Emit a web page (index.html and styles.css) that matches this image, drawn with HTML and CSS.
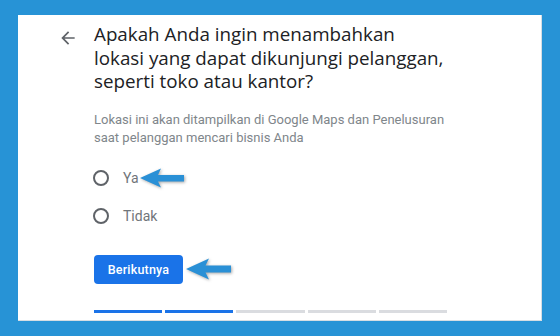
FILE: index.html
```html
<!DOCTYPE html>
<html lang="id">
<head>
<meta charset="utf-8">
<link rel="stylesheet" href="styles.css">
</head>
<body>
<div class="frame">
  <div class="card">
    <div class="back">
      <svg width="20" height="20" viewBox="0 0 24 24"><path d="M20 11H7.83l5.59-5.59L12 4l-8 8 8 8 1.41-1.41L7.83 13H20v-2z" fill="#5f6368"/></svg>
    </div>
    <div class="main">
      <h1 class="title">Apakah Anda ingin menambahkan<br>lokasi yang dapat dikunjungi pelanggan,<br>seperti toko atau kantor?</h1>
      <p class="desc">Lokasi ini akan ditampilkan di Google Maps dan Penelusuran saat pelanggan mencari bisnis Anda</p>
      <div class="options">
        <div class="option">
          <span class="radio"></span>
          <span class="label">Ya</span>
          <svg class="pointer p1" width="46" height="22" viewBox="0 0 46 22"><path d="M1 11 L22 1.5 L19 8 L45 8 L45 14.5 L19 14.5 L22 20.5 Z" fill="#2a90d6"/></svg>
        </div>
        <div class="option">
          <span class="radio"></span>
          <span class="label">Tidak</span>
        </div>
      </div>
      <div class="actions">
        <button class="next">Berikutnya</button>
        <svg class="pointer p2" width="47" height="24" viewBox="0 0 47 24"><path d="M1 12 L24 1.5 L20.5 8.5 L46 8.5 L46 15.5 L20.5 15.5 L24 22.5 Z" fill="#2a90d6"/></svg>
      </div>
      <div class="progress">
        <span class="seg on"></span>
        <span class="seg on"></span>
        <span class="seg"></span>
        <span class="seg"></span>
        <span class="seg"></span>
      </div>
    </div>
  </div>
</div>
</body>
</html>
```

FILE: styles.css
```css
html, body {
  margin: 0;
  padding: 0;
}
body {
  background: #2793d6;
  width: 560px;
  height: 336px;
  overflow: hidden;
}
.frame {
  padding: 15px 18px;
}
.card {
  box-sizing: border-box;
  width: 524px;
  height: 306px;
  background: #fff;
  border-right: 1px solid #d6dde3;
  border-bottom: 1px solid #d6dde3;
  display: flex;
  padding: 8px 0 0 40px;
}
.back {
  width: 36px;
  padding-top: 5px;
}
.back svg {
  display: block;
}
.main {
  width: 353px;
  display: flex;
  flex-direction: column;
}
.title {
  margin: 0;
  font-family: "Open Sans", sans-serif;
  font-weight: 400;
  font-size: 18.8px;
  line-height: 23.5px;
  color: #202124;
  white-space: nowrap;
}
.desc {
  margin: 17px 0 0;
  font-family: Roboto, sans-serif;
  font-size: 13px;
  line-height: 18px;
  color: #80868b;
}
.options {
  margin-top: 19px;
  display: flex;
  flex-direction: column;
  gap: 14px;
}
.option {
  display: flex;
  align-items: center;
  height: 24px;
}
.radio {
  box-sizing: border-box;
  width: 16px;
  height: 16px;
  border: 2px solid #5f6368;
  border-radius: 50%;
  margin-left: -1px;
}
.label {
  margin-left: 14px;
  font-family: Roboto, sans-serif;
  font-size: 14px;
  color: #70757a;
}
.pointer {
  display: block;
  filter: drop-shadow(1px 1.5px 1.5px rgba(0,0,0,0.35));
}
.actions {
  margin-top: 27px;
  display: flex;
  align-items: center;
  gap: 2px;
}
.next {
  width: 89px;
  height: 29px;
  border: none;
  border-radius: 4px;
  background: #1a73e8;
  color: #fff;
  font-family: Roboto, sans-serif;
  font-weight: 500;
  font-size: 12.5px;
  letter-spacing: 0.2px;
  padding: 0;
}
.progress {
  margin-top: 26px;
  display: flex;
  gap: 3px;
}
.seg {
  flex: 1;
  height: 3px;
  background: #dadce0;
}
.seg.on {
  background: #1a73e8;
}
```
